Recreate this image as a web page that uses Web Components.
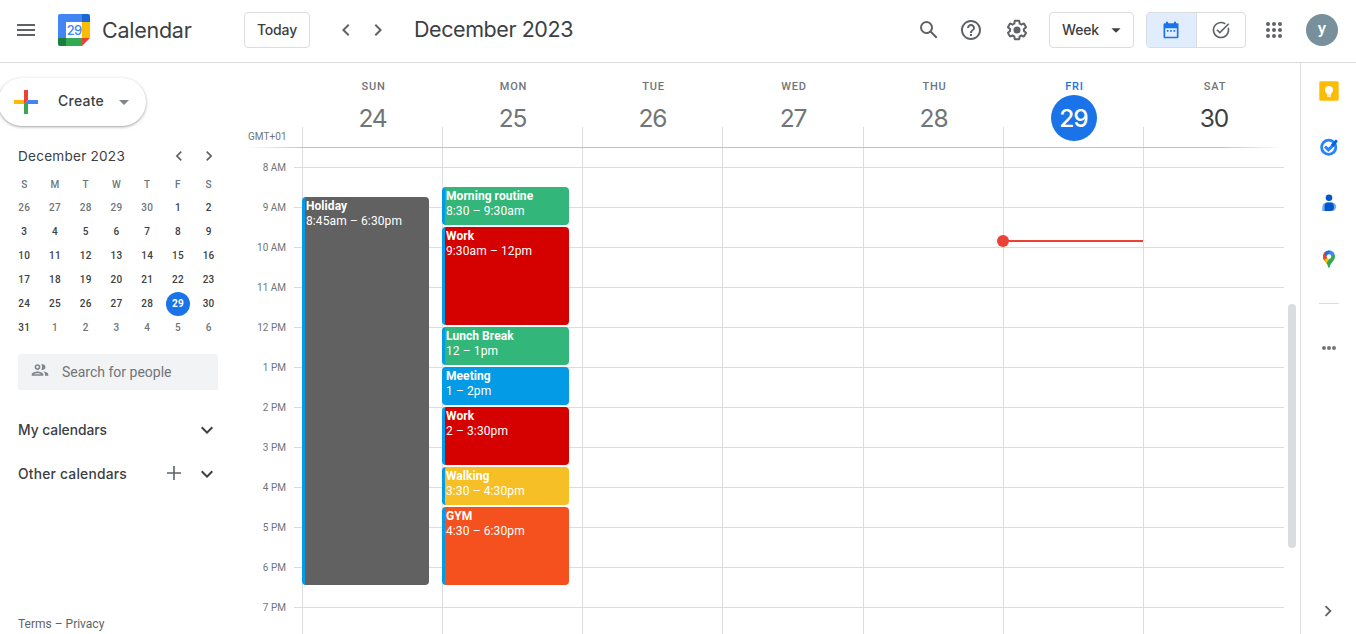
<!DOCTYPE html>
<html lang="en">
<head>
<meta charset="utf-8">
<title>Calendar</title>
<style>
html,body{margin:0;height:100%;overflow:hidden;background:#fff}
body{font-family:Roboto,"Liberation Sans",sans-serif;color:#3c4043;--display:Inter,Roboto,sans-serif;--line:#dadce0;--blue:#1a73e8}
</style>
</head>
<body>
<calendar-app></calendar-app>
<script>
const define = (name, html, setup) => customElements.define(name, class extends HTMLElement {
  connectedCallback() {
    if (this.shadowRoot) return;
    const t = document.createElement('template');
    t.innerHTML = typeof html === 'function' ? html(this) : html;
    this.attachShadow({mode: 'open'}).append(t.content.cloneNode(true));
    if (setup) setup(this);
  }
});

/* Icons: [viewBox, markup] */
const icons = {
  menu: ['0 0 24 24', '<path d="M3 18h18v-2H3v2zm0-5h18v-2H3v2zm0-7v2h18V6H3z"/>'],
  left: ['0 0 24 24', '<path d="M15.41 7.41L14 6l-6 6 6 6 1.41-1.41L10.83 12z"/>'],
  right: ['0 0 24 24', '<path d="M10 6L8.59 7.41 13.17 12l-4.58 4.59L10 18l6-6z"/>'],
  down: ['0 0 24 24', '<path d="M16.59 8.59L12 13.17 7.41 8.59 6 10l6 6 6-6z"/>'],
  caret: ['0 0 24 24', '<path d="M7 10l5 5 5-5z"/>'],
  plus: ['0 0 24 24', '<path d="M19 11.2h-6.2V5h-1.6v6.2H5v1.6h6.2V19h1.6v-6.200H19z"/>'],
  search: ['0 0 24 24', '<path d="M20.49 19l-5.73-5.73C15.53 12.2 16 10.91 16 9.5A6.5 6.5 0 1 0 9.5 16c1.41 0 2.7-.47 3.77-1.24L19 20.49 20.49 19zM5 9.5C5 7.01 7.01 5 9.5 5S14 7.01 14 9.5 11.99 14 9.5 14 5 11.99 5 9.5z"/>'],
  help: ['0 0 24 24', '<path d="M11 18h2v-2h-2v2zm1-16C6.48 2 2 6.48 2 12s4.48 10 10 10 10-4.48 10-10S17.52 2 12 2zm0 18c-4.41 0-8-3.59-8-8s3.59-8 8-8 8 3.59 8 8-3.59 8-8 8zm0-14c-2.21 0-4 1.79-4 4h2c0-1.1.9-2 2-2s2 .9 2 2c0 2-3 1.75-3 5h2c0-2.25 3-2.5 3-5 0-2.21-1.79-4-4-4z"/>'],
  settings: ['0 0 24 24', '<path d="M13.85 22.25h-3.7c-.74 0-1.36-.54-1.45-1.27l-.27-1.89c-.27-.14-.53-.29-.79-.46l-1.8.72c-.7.26-1.47-.03-1.81-.65L2.2 15.53c-.35-.66-.2-1.44.36-1.88l1.53-1.19c-.01-.15-.02-.3-.02-.46 0-.15.01-.31.02-.46l-1.52-1.19c-.59-.45-.74-1.26-.37-1.88l1.85-3.19c.34-.62 1.11-.9 1.79-.63l1.81.73c.26-.17.52-.32.78-.46l.27-1.91c.09-.7.71-1.25 1.44-1.25h3.7c.74 0 1.36.54 1.45 1.27l.27 1.89c.27.14.53.29.79.46l1.8-.72c.71-.26 1.48.03 1.82.65l1.84 3.18c.36.66.2 1.44-.36 1.88l-1.52 1.19c.01.15.02.3.02.46s-.01.31-.02.46l1.52 1.19c.56.45.72 1.23.37 1.86l-1.86 3.22c-.34.62-1.11.9-1.8.63l-1.8-.72c-.26.17-.52.32-.78.46l-.27 1.91c-.1.68-.72 1.22-1.46 1.22zm-3.23-2h2.76l.37-2.55.53-.22c.44-.18.88-.44 1.34-.78l.45-.34 2.38.96 1.38-2.4-2.03-1.58.07-.56c.03-.26.06-.51.06-.78s-.03-.53-.06-.78l-.07-.56 2.03-1.58-1.39-2.4-2.39.96-.45-.35c-.42-.32-.87-.58-1.33-.77l-.52-.22-.37-2.55h-2.76l-.37 2.55-.53.21c-.44.19-.88.44-1.34.79l-.45.33-2.38-.95-1.39 2.39 2.03 1.58-.07.56a7 7 0 0 0-.06.79c0 .26.02.53.06.78l.07.56-2.03 1.58 1.38 2.4 2.39-.96.45.35c.43.33.86.58 1.33.77l.53.22.38 2.55z"/><circle cx="12" cy="12" r="3.5"/>'],
  calendar: ['0 0 24 24', '<path fill-rule="evenodd" d="M20 4h-2V2h-2.5v2h-7V2H6v2H4.5C3.7 4 3 4.7 3 5.500V20c0 1.100.9 2 2 2h14c1.100 0 2-.9 2-2V5.500C21 4.700 20.800 4 20 4zM5 10h14v10H5z"/><path d="M7 12h2v2H7zM11 12h2v2h-2zM15 12h2v2h-2z"/>'],
  task: ['0 0 24 24', '<path d="M22 5.180L10.590 16.600l-4.240-4.240 1.410-1.410 2.830 2.830 10-10L22 5.180zm-2.210 5.040c.13.570.21 1.170.21 1.780 0 4.420-3.580 8-8 8s-8-3.580-8-8 3.580-8 8-8c1.580 0 3.040.46 4.280 1.250l1.440-1.440C16.100 2.670 14.130 2 12 2 6.480 2 2 6.480 2 12s4.480 10 10 10 10-4.480 10-10c0-1.190-.22-2.330-.6-3.390l-1.610 1.610z"/>'],
  apps: ['0 0 24 24', '<g>' + [6,12,18].map(y => [6,12,18].map(x => `<circle cx="${x}" cy="${y}" r="2"/>`).join('')).join('') + '</g>'],
  people: ['0 0 24 24', '<path d="M9 12c1.930 0 3.500-1.570 3.500-3.500S10.930 5 9 5 5.500 6.570 5.500 8.500 7.070 12 9 12zm0-5c.83 0 1.500.67 1.500 1.500S9.830 10 9 10s-1.500-.67-1.500-1.500S8.170 7 9 7zm0 6.750c-2.340 0-7 1.170-7 3.500V19h14v-1.750c0-2.330-4.660-3.500-7-3.500zM4.340 17c.84-.58 2.870-1.250 4.660-1.250s3.820.67 4.660 1.250H4.340zm11.700-3.190c1.160.84 1.960 1.960 1.960 3.440V19h4v-1.750c0-2.020-3.500-3.170-5.960-3.440zM15 12c1.930 0 3.500-1.570 3.500-3.500S16.930 5 15 5c-.54 0-1.040.13-1.500.35.63.89 1 1.980 1 3.150s-.37 2.260-1 3.150c.46.220.96.350 1.500.350z"/>'],
  more: ['0 0 18 18', '<circle cx="4" cy="9" r="2"/><circle cx="9" cy="9" r="2"/><circle cx="14" cy="9" r="2"/>'],
  create: ['0 0 36 36', '<path fill="#34A853" d="M16 16v14h4V20z"/><path fill="#4285F4" d="M30 16H20l-4 4h14z"/><path fill="#FBBC05" d="M6 16v4h10l4-4z"/><path fill="#EA4335" d="M20 16V6h-4v14z"/>'],
  keep: ['0 0 20 20', '<rect x=".3" y=".3" width="19.400" height="19.400" rx="1.500" fill="#fbbc04"/><path fill="#fff" d="M10 5a4 4 0 0 0-2.300 7.300V13.700h4.600v-1.400A4 4 0 0 0 10 5z"/><path fill="#fff" d="M8 14.400h4v1.300H8z"/>'],
  tasks: ['0 0 20 20', '<circle cx="9.700" cy="10.200" r="7.100" fill="none" stroke="#2684fc" stroke-width="2.800"/><path d="M6 9.500l3.400 3.400 5-5" fill="none" stroke="#2684fc" stroke-width="3"/><path d="M12 7.500l4.200-4.600c1-.9 3 .6 2.200 1.800l-3.800 5.300z" fill="#0066da"/>'],
  contacts: ['0 0 20 20', '<circle cx="10" cy="4.800" r="3.300" fill="#0057cc"/><path fill="#7baaf7" d="M8 9.600h5a4.200 4.200 0 0 1 0 8.400H3.200v-3.600C3.200 11.500 5.200 9.600 8 9.600z"/><path fill="#0057cc" d="M8.500 9.600h3.200c2 0 3.200 1.600 3.200 3.600v1.600c0 2-1.200 3.200-3.200 3.200H5.600v-5c0-2 1-3.400 2.900-3.400z"/>'],
  maps: ['0 0 20 20', '<clipPath id="p"><path d="M10 1.500a6 6 0 0 0-6 6.100c0 4.400 4.200 5.700 5.300 10.700.2.700 1.200.7 1.400 0 1.100-5 5.300-6.300 5.300-10.700a6 6 0 0 0-6-6.100z"/></clipPath><g clip-path="url(#p)"><path fill="#34a853" d="M0 0h20v20H0z"/><path fill="#fbbc04" d="M2 13L14 0v3l-3 6-4 6z"/><path fill="#ea4335" d="M2 2h4l4 5.500-5.500 4H2z"/><path fill="#1a73e8" d="M5.200 3.500L8.500 0h5l-5.500 7.500z"/><path fill="#4285f4" d="M8 7l5-7 3 4-5 4z"/></g><circle cx="10" cy="7.600" r="2.300" fill="#fff"/>'],
  logo: ['0 0 32 32', '<path fill="#4285f4" d="M2 0h22v8H8v16H0V2a2 2 0 0 1 2-2z"/><path fill="#1967d2" d="M24 0h6a2 2 0 0 1 2 2v6h-8z"/><path fill="#fbbc04" d="M24 8h8v16h-8z"/><path fill="#188038" d="M0 24h8v8H2a2 2 0 0 1-2-2z"/><path fill="#34a853" d="M8 24h16v8H8z"/><path fill="#ea4335" d="M24 24h8l-8 8z"/><path fill="#fff" d="M8 8h16v16H8z"/><text x="16" y="20.800" text-anchor="middle" font-family="Inter,sans-serif" font-size="13" font-weight="500" letter-spacing="-.8" fill="#4285f4">29</text>']
};
define('cal-icon', el => {
  const [box, body] = icons[el.getAttribute('name')], s = el.getAttribute('size') || 24;
  return `<style>:host{display:inline-flex;flex:none;width:${s}px;height:${s}px}svg{width:100%;height:100%;fill:currentColor}</style><svg viewBox="${box}">${body}</svg>`;
});

/* Display-face label whose tracking is spread so the text fills a set width */
define('sized-label', `<style>:host{display:inline-block;white-space:nowrap;flex:none;font-family:var(--display)}span{display:inline-block}</style><span><slot></slot></span>`, el => {
  const span = el.shadowRoot.querySelector('span'), w = +el.getAttribute('width');
  requestAnimationFrame(() => {
    span.style.letterSpacing = (w - span.getBoundingClientRect().width) / el.textContent.length + 'px';
  });
});

define('cal-button', `<style>:host{display:flex;box-sizing:border-box;height:36px;border:1px solid var(--line);border-radius:4px;align-items:center;padding:0 0 0 12px;font-size:14px;font-weight:500;color:#3c4043}</style><slot></slot>`);

define('view-toggle', `<style>:host{display:flex;box-sizing:border-box;width:100px;height:36px;border:1px solid var(--line);border-radius:4px;overflow:hidden;color:#5f6368}
span{flex:1;display:flex;align-items:center;justify-content:center}
.on{background:#e1edfc;color:var(--blue);border-right:1px solid var(--line)}</style>
<span class="on"><cal-icon name="calendar" size="20"></cal-icon></span><span><cal-icon name="task" size="20"></cal-icon></span>`);

define('cal-header', `<style>
:host{display:flex;align-items:center;box-sizing:border-box;height:63px;padding:0 18px 3px 14px;border-bottom:1px solid var(--line);color:#5f6368}
.logo{margin:0 12px 0 20px}
.brand{font-size:21.500px;color:#3c4043;width:142px}
.nav{display:flex;gap:8px;margin-left:24px}
.title{font-size:21.500px;color:#3c4043;margin:-2px 0 0 24px;flex:1}
.week{width:85px;margin:0 12px 0 20px}
.week cal-icon{margin-left:6px;color:#3c4043}
.avatar{width:32px;height:32px;border-radius:50%;background:#78909c;color:#fff;display:flex;align-items:center;justify-content:center;font-size:17px;font-weight:500;margin-left:20px;line-height:28px}
.avatar span{margin-top:-3px}
</style>
<cal-icon name="menu"></cal-icon><cal-icon class="logo" name="logo" size="32"></cal-icon>
<sized-label class="brand" width="89.500">Calendar</sized-label>
<cal-button style="width:66px"><sized-label width="40">Today</sized-label></cal-button>
<div class="nav"><cal-icon name="left"></cal-icon><cal-icon name="right"></cal-icon></div>
<sized-label class="title" width="159">December 2023</sized-label>
<cal-icon name="search"></cal-icon><cal-icon name="help" style="margin:0 22px 0 18px"></cal-icon><cal-icon name="settings"></cal-icon>
<cal-button class="week"><sized-label width="37">Week</sized-label><cal-icon name="caret" size="22"></cal-icon></cal-button>
<view-toggle></view-toggle>
<cal-icon name="apps" style="margin-left:16px"></cal-icon>
<div class="avatar"><span>y</span></div>`);

define('mini-calendar', () => {
  const days = [26,27,28,29,30,...Array.from({length:31}, (_, i) => i + 1),1,2,3,4,5,6];
  return `<style>:host{display:block}
.head{display:flex;align-items:center;height:24px;padding:1px 21px 0 18px;font-size:13.600px}
.head sized-label{flex:1;font-weight:400;color:#3c4043}
.head cal-icon{color:#5f6368;margin-left:10px}
.grid{display:grid;grid-template-columns:repeat(7,1fr);grid-auto-rows:24px;padding:4px 16px 0 9px;font-size:10px;font-weight:500;letter-spacing:.300px;text-align:center;line-height:24px;color:#3c4043}
.wd{line-height:26px}
.dim{color:#70757a}.today{background:var(--blue);color:#fff;border-radius:50%;width:24px;justify-self:center;font-weight:700}
</style><div class="head"><sized-label width="107">December 2023</sized-label><cal-icon name="left" size="20"></cal-icon><cal-icon name="right" size="20"></cal-icon></div>
<div class="grid">${[...'SMTWTFS'].map(d => `<span class="dim wd">${d}</span>`).join('')}${days.map((d, i) => `<span class="${i < 5 || i > 35 ? 'dim' : i === 33 ? 'today' : ''}">${d}</span>`).join('')}</div>`;
});

define('sidebar-section', `<style>:host{display:flex;align-items:center;height:44px;padding:0 21px 0 18px;font-size:13.800px;font-weight:450;color:#3c4043}
.icons{display:flex;gap:9px;margin-left:auto;align-items:center}</style><slot></slot><div class="icons"><slot name="actions"></slot><cal-icon name="down"></cal-icon></div>`);

define('cal-sidebar', `<style>
:host{display:flex;flex-direction:column;width:240px;flex:none}
.create{display:flex;align-items:center;box-sizing:border-box;width:148px;height:48px;margin:15px 0 17px -2px;padding-left:10px;border-radius:24px;font-size:14px;font-weight:450;box-shadow:0 1px 2px rgba(60,64,67,.3),0 1px 3px 1px rgba(60,64,67,.15)}
.create sized-label{margin:-3px 8px 0 14px}
.create .caret{color:#80868b;margin-top:-1px}
.search{display:flex;align-items:center;width:200px;height:36px;box-sizing:border-box;margin:14px 0 18px 18px;padding-left:12px;background:#f1f3f4;border-radius:4px 4px 0 0;font-size:14px;color:#70757a}
.search cal-icon{margin:-4px 12px 0 0;color:#80868b}
sidebar-section cal-icon{color:#5f6368;margin-top:-2px}
.foot{margin:auto 0 0 18px;padding-bottom:2px;font-size:12px;line-height:16px;color:#5f6368}
</style>
<div class="create"><cal-icon name="create" size="36"></cal-icon><sized-label width="46">Create</sized-label><cal-icon class="caret" name="caret"></cal-icon></div>
<mini-calendar></mini-calendar>
<div class="search"><cal-icon name="people" size="20"></cal-icon>Search for people</div>
<sidebar-section><sized-label width="89">My calendars</sized-label></sidebar-section>
<sidebar-section><sized-label width="109">Other calendars</sized-label><cal-icon slot="actions" name="plus"></cal-icon></sidebar-section>
<div class="foot">Terms – Privacy</div>`);

define('cal-event', el => {
  const a = n => el.getAttribute(n), y = h => (h - 7.500) * 40 - 1;
  return `<style>:host{position:absolute;left:-1px;top:${y(+a('from'))}px;width:127px;height:${(a('to') - a('from')) * 40 - 2}px;box-sizing:border-box;border-left:3px solid #039be5;border-radius:4px;background:${a('color')};color:#fff;font-size:12px;line-height:15px;padding:2px 1px;white-space:nowrap;overflow:hidden}
b{display:block;font-weight:700;letter-spacing:.060px}span{letter-spacing:.110px}</style><b><slot></slot></b><span>${a('time')}</span>`;
});

define('now-line', `<style>:host{position:absolute;left:-1px;right:0;top:92px;height:2px;background:#ea4335}i{position:absolute;width:12px;height:12px;left:-6px;top:-5px;border-radius:50%;background:#ea4335}</style><i></i>`);

define('day-heading', el => `<style>:host{display:flex;flex-direction:column;align-items:center;position:relative;padding:17px 0 0 1px;color:#70757a}
.name{font-size:11px;font-weight:500;line-height:14px;letter-spacing:.800px;padding-left:2px}
.num{font-family:var(--display);font-size:24.500px;letter-spacing:-1.100px;line-height:46px;width:46px;text-align:center;border-radius:50%;margin-top:1px}
:host([today]) .name{color:var(--blue)}:host([today]) .num{background:var(--blue);color:#fff;font-weight:450}
:host([future]) .num{color:#3c4043}
.tick{position:absolute;left:0;bottom:0;width:1px;height:20px;background:var(--line)}
</style><span class="name">${el.getAttribute('day')}</span><span class="num"><slot></slot></span><i class="tick"></i>`);

define('week-view', () => {
  const hours = ['8 AM','9 AM','10 AM','11 AM','12 PM','1 PM','2 PM','3 PM','4 PM','5 PM','6 PM','7 PM'];
  return `<style>
:host{flex:1;display:grid;grid-template-rows:84px 1px 1fr;min-width:0;overflow:hidden}
.head,.body{display:grid;grid-template-columns:62px 140px 140px 140px 141px 140px 140px 141px 16px;min-height:0}
.zone{align-self:end;font-size:10px;line-height:12px;color:#70757a;padding:0 0 4px 8px;letter-spacing:.050px}
.rule{background:linear-gradient(90deg,transparent 8px,#bfc1c3 66px,#bfc1c3 calc(100% - 80px),transparent calc(100% - 16px))}
.body{background:linear-gradient(var(--line) 1px,transparent 1px) 54px 19px/990px 40px repeat;background-repeat:no-repeat repeat;background-position:54px 19px;overflow:hidden}
.hours{display:flex;flex-direction:column;font-size:10px;color:#70757a;text-align:right;padding-right:16px}
.hours span{flex:0 0 40px;line-height:40px}
.day{border-left:1px solid var(--line);position:relative}
.bar{justify-self:center;width:8px;height:244px;margin-top:156px;border-radius:4px;background:#dadce0}
</style>
<div class="head"><div class="zone">GMT+01</div>
<day-heading day="SUN">24</day-heading><day-heading day="MON">25</day-heading><day-heading day="TUE">26</day-heading><day-heading day="WED">27</day-heading><day-heading day="THU">28</day-heading><day-heading day="FRI" today>29</day-heading><day-heading day="SAT" future>30</day-heading></div>
<div class="rule"></div>
<div class="body"><div class="hours">${hours.map(h => `<span>${h}</span>`).join('')}</div>
<div class="day"><cal-event from="8.750" to="18.500" color="#616161" time="8:45am – 6:30pm">Holiday</cal-event></div>
<div class="day">
<cal-event from="8.500" to="9.500" color="#33b679" time="8:30 – 9:30am">Morning routine</cal-event>
<cal-event from="9.500" to="12" color="#d50000" time="9:30am – 12pm">Work</cal-event>
<cal-event from="12" to="13" color="#33b679" time="12 – 1pm">Lunch Break</cal-event>
<cal-event from="13" to="14" color="#039be5" time="1 – 2pm">Meeting</cal-event>
<cal-event from="14" to="15.500" color="#d50000" time="2 – 3:30pm">Work</cal-event>
<cal-event from="15.500" to="16.500" color="#f6bf26" time="3:30 – 4:30pm">Walking</cal-event>
<cal-event from="16.500" to="18.500" color="#f4511e" time="4:30 – 6:30pm">GYM</cal-event></div>
<div class="day"></div><div class="day"></div><div class="day"></div><div class="day"><now-line></now-line></div><div class="day"></div>
<div class="bar"></div></div>`;
});

define('side-panel', `<style>:host{display:flex;flex-direction:column;align-items:center;flex:none;width:56px;box-sizing:border-box;border-left:1px solid var(--line);padding:18px 0 12px 1px;color:#757575}
.apps{display:flex;flex-direction:column;gap:36px}hr{width:20px;height:1px;border:0;background:var(--line);margin:34px 0 35px}.close{margin:auto 2px 0 0;color:#5f6368}</style>
<div class="apps"><cal-icon name="keep" size="20"></cal-icon><cal-icon name="tasks" size="20"></cal-icon><cal-icon name="contacts" size="20"></cal-icon><cal-icon name="maps" size="20"></cal-icon></div><hr><cal-icon name="more" size="18"></cal-icon><cal-icon class="close" name="right" size="22"></cal-icon>`);

define('calendar-app', `<style>:host{display:flex;flex-direction:column;height:100vh;overflow:hidden}main{display:flex;flex:1;min-height:0}</style>
<cal-header></cal-header><main><cal-sidebar></cal-sidebar><week-view></week-view><side-panel></side-panel></main>`);
</script>
</body>
</html>
